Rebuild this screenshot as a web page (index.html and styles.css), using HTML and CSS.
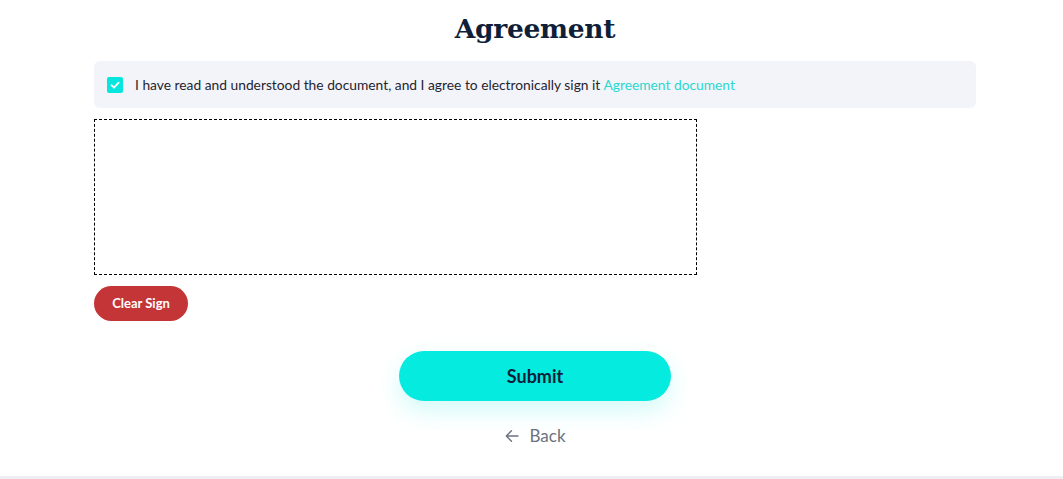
FILE: index.html
```html
<!DOCTYPE html>
<html>
<head>
<meta charset="utf-8">
<link rel="stylesheet" href="styles.css">
</head>
<body>
<main class="page">
  <h1 class="title">Agreement</h1>
  <div class="agree">
    <span class="check"><svg width="12" height="12" viewBox="0 0 12 12"><path d="M2.5 6.2 L5 8.6 L9.6 3.6" fill="none" stroke="#fff" stroke-width="1.8" stroke-linecap="round" stroke-linejoin="round"/></svg></span>
    <span class="agree-text">I have read and understood the document, and I agree to electronically sign it <a class="link" href="#">Agreement document</a></span>
  </div>
  <div class="sign-pad"></div>
  <button class="clear-btn">Clear Sign</button>
  <div class="actions">
    <button class="submit-btn">Submit</button>
    <a class="back" href="#"><svg width="16" height="16" viewBox="0 0 16 16"><path d="M14 8 H2.5 M7.5 2.8 L2.3 8 L7.5 13.2" fill="none" stroke="#6b7280" stroke-width="1.4" stroke-linecap="round" stroke-linejoin="round"/></svg><span>Back</span></a>
  </div>
</main>
<div class="footer-line"></div>
</body>
</html>
```
FILE: styles.css
```css
html, body { margin: 0; padding: 0; background: #fff; }
body { font-family: Lato, "Noto Sans", sans-serif; color: #1f2937; }
.page {
  width: 882px;
  margin-left: 94px;
  height: 476px;
  display: flex;
  flex-direction: column;
  align-items: flex-start;
}
.title {
  align-self: center;
  margin: 9px 0 0 0;
  font-family: "DejaVu Serif", "Liberation Serif", serif;
  font-weight: bold;
  font-size: 26.5px;
  line-height: 40px;
  color: #0f1f3a;
  letter-spacing: -0.3px;
}
.agree {
  margin-top: 12px;
  width: 100%;
  box-sizing: border-box;
  height: 47px;
  background: #f3f4f9;
  border-radius: 6px;
  display: flex;
  align-items: center;
  padding-left: 13px;
}
.check {
  width: 16px; height: 16px;
  background: #06e6de;
  border-radius: 2px;
  display: flex; align-items: center; justify-content: center;
  margin-right: 12px;
}
.agree-text { font-size: 13.8px; color: #1f2430; }
.link { color: #2ad8d0; text-decoration: none; }
.sign-pad {
  margin-top: 11px;
  width: 603px;
  height: 156px;
  box-sizing: border-box;
  border: 1px dashed #000;
}
.clear-btn {
  margin-top: 11px;
  width: 94px; height: 35px;
  border: none;
  border-radius: 18px;
  background: #c43538;
  color: #fff;
  font-family: Lato, sans-serif;
  font-weight: bold;
  font-size: 13px;
  padding: 0 0 1px 0;
}
.actions {
  align-self: center;
  margin-top: 30px;
  display: flex;
  flex-direction: column;
  align-items: center;
}
.submit-btn {
  width: 272px; height: 50px;
  border: none;
  border-radius: 25px;
  background: #06ebe0;
  color: #0e1f3a;
  font-family: Lato, sans-serif;
  font-weight: bold;
  font-size: 18px;
  padding: 0 0 1px 0;
  box-shadow: 0 10px 24px rgba(6, 235, 224, 0.18);
}
.back {
  margin-top: 24px;
  display: flex; align-items: center; gap: 9px;
  text-decoration: none;
  color: #6b7280;
  font-size: 17px;
  margin-left: 0;
}
.footer-line { height: 3px; background: #eeeef3; }
```
